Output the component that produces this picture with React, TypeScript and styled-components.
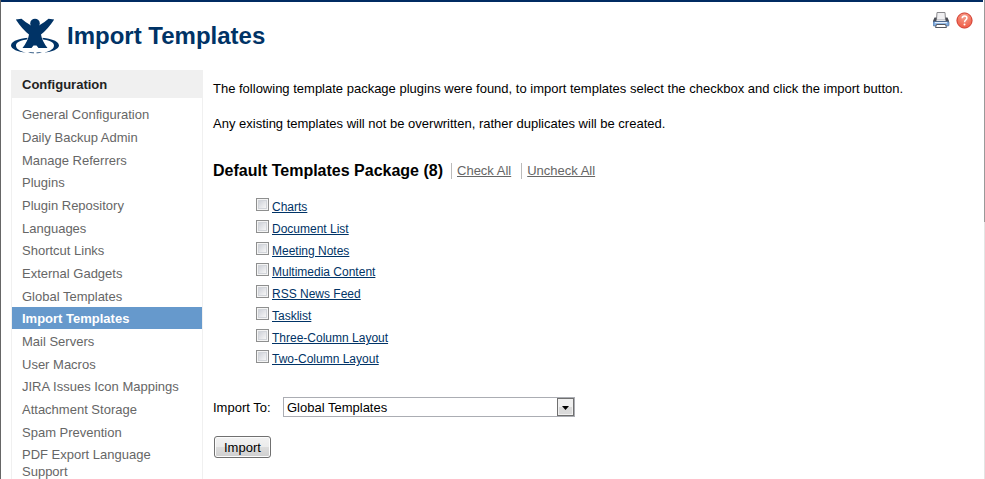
import React, { useState } from "react";
import styled, { createGlobalStyle } from "styled-components";

const GlobalStyle = createGlobalStyle`
  * { box-sizing: border-box; }
  html { overflow: hidden; }
  body {
    margin: 0;
    background: #fff;
    color: #000;
    font-family: "Liberation Sans", Arial, sans-serif;
    font-size: 13px;
    line-height: 17px;
  }
`;

const Page = styled.div`
  min-height: 100vh;
  border-left: 1px solid #666;
  display: grid;
  grid-template-columns: minmax(0, 1fr) 1px;
  column-gap: 1px;
`;

const Frame = styled.div`
  border-top: 2px solid #002b62;
`;

const ScrollEdge = styled.div`
  background: #e4e4e4;
`;

const ScrollThumb = styled.div`
  height: 222px;
  background: #999;
`;

const Header = styled.header`
  display: flex;
  align-items: flex-start;
  padding: 10px 10px 8px 10px;
`;

const Logo = styled.svg`
  width: 50px;
  height: 50px;
  flex: none;
`;

const Title = styled.h1`
  flex: 1;
  margin: 9px 0 0 6px;
  font-size: 24px;
  line-height: 30px;
  color: #036;
`;

const Tools = styled.div`
  display: flex;
  gap: 6px;
`;

const IconLink = styled.a`
  display: block;
  width: 17px;
  height: 17px;
  svg { display: block; }
`;

const Columns = styled.div`
  display: flex;
  align-items: flex-start;
  padding-left: 10px;
`;

const Sidebar = styled.nav`
  flex: 0 0 192px;
  border: 1px solid #f0f0f0;
  border-top: 0;
`;

const SidebarTitle = styled.h2`
  margin: 0;
  padding: 6px 10px 5px;
  background: #f0f0f0;
  color: #222;
  font-size: 13px;
  line-height: 17px;
`;

const Menu = styled.ul`
  list-style: none;
  margin: 0;
  padding: 5px 0;
`;

const MenuItem = styled.li`
  margin-bottom: 1px;
  &:nth-child(3n) { margin-bottom: 0; }
`;

const MenuLink = styled.a<{ $active: boolean }>`
  display: block;
  padding: 3px 10px 2px;
  text-decoration: none;
  color: ${(p) => (p.$active ? "#fff" : "#666")};
  background: ${(p) => (p.$active ? "#69c" : "transparent")};
  font-weight: ${(p) => (p.$active ? "bold" : "normal")};
`;

const Content = styled.main`
  flex: 1;
  min-width: 0;
  padding: 10px 10px 0;
`;

const Intro = styled.p`
  margin: 0 0 18px;
`;

const PackageHeader = styled.div`
  display: flex;
  align-items: center;
  margin-top: 29px;
`;

const PackageTitle = styled.h3`
  margin: 0 8px 0 0;
  font-size: 16px;
  line-height: 20px;
`;

const LinkButton = styled.button`
  border: 0;
  border-left: 1px solid #bbb;
  margin: 0 10px 0 0;
  padding: 0 0 0 5px;
  background: none;
  font: inherit;
  line-height: 16px;
  color: #666;
  text-decoration: underline;
  cursor: pointer;
`;

const TemplateList = styled.ul`
  list-style: none;
  margin: 16px 0 0;
  padding: 0 0 0 43px;
  font-size: 12px;
`;

const TemplateRow = styled.li`
  display: flex;
  align-items: flex-start;
  gap: 3px;
  height: 22px;
  &:nth-child(4n + 3) { height: 21px; }
`;

const Checkbox = styled.input`
  appearance: none;
  width: 13px;
  height: 13px;
  margin: 1px 0 0;
  border: 1px solid #8e8f8f;
  background: linear-gradient(135deg, #cfd2d9, #f6f6f6) content-box;
  padding: 2px;
  box-shadow: inset 0 0 0 1px #f4f4f4, inset 0 0 0 2px #d2d5da;
  &:checked { background: #036 content-box; }
`;

const TemplateLink = styled.a`
  color: #036;
  line-height: 20px;
`;

const Field = styled.div`
  display: flex;
  align-items: center;
  margin-top: 26px;
`;

const FieldLabel = styled.label`
  flex: 0 0 70px;
`;

const SelectBox = styled.div`
  display: flex;
  width: 292px;
  height: 20px;
  border: 1px solid #abadb3;
  position: relative;
`;

const Select = styled.select`
  appearance: none;
  flex: 1;
  border: 0;
  margin: 0;
  padding: 0 20px 0 3px;
  background: #fff;
  color: #000;
  font: inherit;
`;

const SelectArrow = styled.svg`
  position: absolute;
  top: 0;
  right: 0;
  pointer-events: none;
`;

const ImportButton = styled.button`
  margin: 19px 0 0 1px;
  padding: 0 9px;
  height: 22px;
  border: 1px solid #707070;
  border-radius: 3px;
  background: linear-gradient(#f2f2f2, #ebebeb 50%, #ddd 50%, #cfcfcf);
  box-shadow: inset 0 0 0 1px #fcfcfc;
  color: #000;
  font: inherit;
`;

const menu = [
  "General Configuration", "Daily Backup Admin", "Manage Referrers", "Plugins",
  "Plugin Repository", "Languages", "Shortcut Links", "External Gadgets",
  "Global Templates", "Import Templates", "Mail Servers", "User Macros",
  "JIRA Issues Icon Mappings", "Attachment Storage", "Spam Prevention",
  "PDF Export Language Support",
];

const templates = [
  "Charts", "Document List", "Meeting Notes", "Multimedia Content",
  "RSS News Feed", "Tasklist", "Three-Column Layout", "Two-Column Layout",
];

function CompanyLogo() {
  return (
    <Logo viewBox="0 0 50 50" aria-hidden="true">
      <path
        fill="#036"
        fillRule="evenodd"
        d="M24 25.500C10 25.500 0 28.500 0 33.500C0 37 7 40 15 40.500C8 39 5 36.500 5 33.500C5 29.500 12 27 24 27C36 27 43 29.500 43 33.500C43 36.500 40 39 33 40.500C41 40 48 37 48 33.500C48 28.500 38 25.500 24 25.500Z"
      />
      <path fill="#036" d="M17 40.300Q20 40 23 40.600V41.200Q20 41.400 17 40.300ZM25.500 40.600Q29 40 31 40.300Q28 41.400 25.500 41.200Z" />
      <path
        stroke="#fff"
        strokeWidth="1.200"
        paintOrder="stroke"
        fill="#036"
        d="M4.800 7.500L10.500 6.800Q14.500 10.500 20 13.500H28Q33.500 10.500 37.500 6.800L43.200 7.500Q37 17 30 22.500Q31 29 36.500 36H27.500L25.500 33.500H22.500L20.500 36H11.500Q17 29 18 22.500Q11 17 4.800 7.500Z"
      />
      <circle cx="24" cy="11.500" r="4.800" fill="#036" />
    </Logo>
  );
}

function PrinterIcon() {
  return (
    <svg width="17" height="17" viewBox="0 0 17 17" aria-hidden="true">
      <path d="M4 .5h8l.5 7h-9z" fill="#f0f0f2" stroke="#8a8a8e" />
      <path d="M1.500 5.500h2V9h9V5.500h2L16 9v2H0V9z" fill="#4a4c54" />
      <path d="M4 7h8v1.500H4z" fill="#c9cacf" />
      <path d="M1 9.500h14q1 0 1 1V13q0 1-1 1H1q-1 0-1-1v-2.500q0-1 1-1z" fill="#80acdf" stroke="#44618c" strokeWidth=".6" />
      <path d="M2 10h12v1.200H2z" fill="#e3effc" />
      <path d="M3.500 12.500h9l1 3h-11z" fill="#fff" stroke="#55575f" />
    </svg>
  );
}

function HelpIcon() {
  return (
    <svg width="17" height="17" viewBox="0 0 17 17" aria-hidden="true">
      <defs>
        <radialGradient id="helpFill" cx="50%" cy="25%" r="75%">
          <stop offset="0" stopColor="#f5a08d" />
          <stop offset="1" stopColor="#f05a44" />
        </radialGradient>
      </defs>
      <circle cx="8.500" cy="8.500" r="7.600" fill="url(#helpFill)" stroke="#d0392c" />
      <path d="M6.200 6.200Q6.400 4 8.600 4Q10.900 4 10.900 6.100Q10.900 7.300 9.600 8.100Q8.600 8.800 8.600 10.200" fill="none" stroke="#fff" strokeWidth="1.500" />
      <circle cx="8.500" cy="12.600" r="1" fill="#fff" />
    </svg>
  );
}

export default function App() {
  const [checked, setChecked] = useState<string[]>([]);
  const toggle = (name: string) =>
    setChecked((list) => (list.includes(name) ? list.filter((n) => n !== name) : [...list, name]));

  return (
    <>
      <GlobalStyle />
      <Page>
        <Frame>
          <Header>
            <CompanyLogo />
            <Title>Import Templates</Title>
            <Tools>
              <IconLink href="#print" aria-label="Print"><PrinterIcon /></IconLink>
              <IconLink href="#help" aria-label="Help"><HelpIcon /></IconLink>
            </Tools>
          </Header>
          <Columns>
            <Sidebar aria-label="Configuration">
              <SidebarTitle>Configuration</SidebarTitle>
              <Menu>
                {menu.map((name) => (
                  <MenuItem key={name}>
                    <MenuLink href="#menu" $active={name === "Import Templates"}>{name}</MenuLink>
                  </MenuItem>
                ))}
              </Menu>
            </Sidebar>
            <Content>
              <Intro>
                The following template package plugins were found, to import templates select the
                checkbox and click the import button.
              </Intro>
              <Intro>Any existing templates will not be overwritten, rather duplicates will be created.</Intro>
              <PackageHeader>
                <PackageTitle>Default Templates Package (8)</PackageTitle>
                <LinkButton type="button" onClick={() => setChecked(templates)}>Check All</LinkButton>
                <LinkButton type="button" onClick={() => setChecked([])}>Uncheck All</LinkButton>
              </PackageHeader>
              <TemplateList>
                {templates.map((name) => (
                  <TemplateRow key={name}>
                    <Checkbox
                      type="checkbox"
                      aria-label={name}
                      checked={checked.includes(name)}
                      onChange={() => toggle(name)}
                    />
                    <TemplateLink href="#template">{name}</TemplateLink>
                  </TemplateRow>
                ))}
              </TemplateList>
              <Field>
                <FieldLabel htmlFor="importTo">Import To:</FieldLabel>
                <SelectBox>
                  <Select id="importTo" defaultValue="global">
                    <option value="global">Global Templates</option>
                  </Select>
                  <SelectArrow width="17" height="18" viewBox="0 0 17 18" aria-hidden="true">
                    <rect x=".5" y=".5" width="16" height="17" fill="#f0f0f0" stroke="#707070" />
                    <path d="M2 9h13v7H2z" fill="#dadada" />
                    <path d="M5 8h7l-3.500 4z" fill="#000" />
                  </SelectArrow>
                </SelectBox>
              </Field>
              <ImportButton type="button">Import</ImportButton>
            </Content>
          </Columns>
        </Frame>
        <ScrollEdge><ScrollThumb /></ScrollEdge>
      </Page>
    </>
  );
}
